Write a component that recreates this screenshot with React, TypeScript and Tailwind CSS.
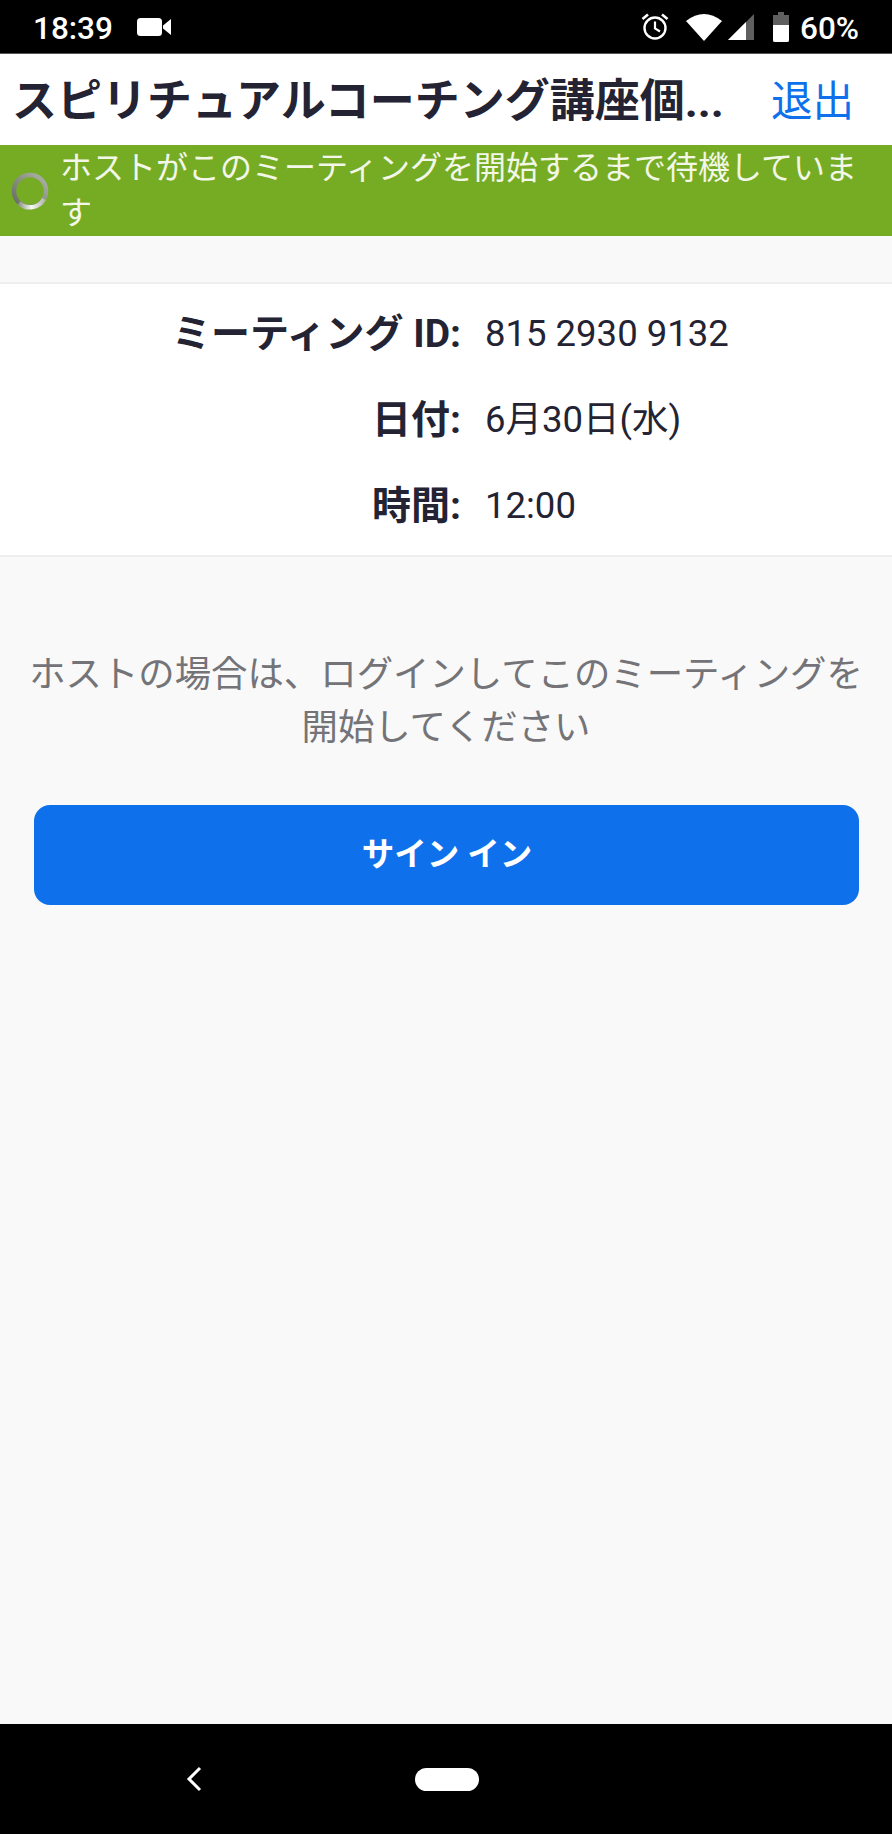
const FONT = "font-['Roboto','Noto_Sans_CJK_JP',sans-serif]";

function StatusBar() {
  return (
    <div className="h-[54px] bg-black flex items-center text-white border-b border-[#555] shrink-0">
      <span className="ml-[33px] mt-[4px] text-[31.5px] leading-none font-medium">18:39</span>
      <svg className="ml-[24px]" width="35" height="20" viewBox="0 0 35 20">
        <rect x="0" y="1" width="25" height="18" rx="3.5" fill="#fff" />
        <path d="M26 8.5 L34 2 V18 L26 11.5 Z" fill="#fff" />
      </svg>
      <div className="ml-auto flex items-center">
        <svg width="30" height="30" viewBox="0 0 30 30" fill="none" stroke="#fff">
          <circle cx="15" cy="16" r="10.5" strokeWidth="2.4" />
          <path d="M15 9.5 V16.5 L20 19.5" strokeWidth="2.2" />
          <path d="M2.5 7 L8 2.5 M27.5 7 L22 2.5" strokeWidth="2.6" />
        </svg>
        <svg className="ml-[16px]" width="36" height="28" viewBox="0 0 36 28">
          <path d="M0 8 Q18 -6 36 8 L18 28 Z" fill="#fff" />
        </svg>
        <svg className="ml-[5px]" width="28" height="28" viewBox="0 0 28 28">
          <path d="M27 1 V27 H1 Z" fill="#5f5f5f" />
          <path d="M19 9 V27 H1 Z" fill="#fff" />
        </svg>
        <svg className="ml-[17px]" width="18" height="30" viewBox="0 0 18 30">
          <path d="M6 0 H12 V3 H17 V30 H1 V3 H6 Z" fill="#5f5f5f" />
          <path d="M1 13 H17 V28 Q17 30 15 30 H3 Q1 30 1 28 Z" fill="#fff" />
        </svg>
        <span className="ml-[10px] mr-[33px] mt-[4px] text-[31.5px] leading-none font-medium">60%</span>
      </div>
    </div>
  );
}

function InfoRow({ label, value }: { label: string; value: string }) {
  return (
    <div className="flex items-center h-[86px]">
      <div className="w-[461px] text-right text-[39px] font-bold text-[#232333] leading-none">{label}</div>
      <div className="ml-[24px] text-[36.5px] text-[#232333] leading-none">{value}</div>
    </div>
  );
}

export default function App() {
  return (
    <div className={`${FONT} w-[892px] h-[1834px] flex flex-col bg-[#f9f9f9]`}>
      <StatusBar />

      {/* Title bar */}
      <div className="h-[91px] bg-white flex items-center pl-[12px] pt-[4px] shrink-0">
        <h1 className="text-[45px] font-bold text-[#232333] leading-none whitespace-nowrap w-[759px]">
          スピリチュアルコーチング講座個...
        </h1>
        <span className="text-[41.5px] text-[#0e71eb] leading-none">退出</span>
      </div>

      {/* Waiting banner */}
      <div className="h-[91px] bg-[#76ac24] flex items-center shrink-0">
        <svg className="ml-[11px] shrink-0" width="38" height="38" viewBox="0 0 38 38" fill="none">
          <defs>
            <linearGradient id="ring" x1="1" y1="0" x2="0" y2="1">
              <stop offset="0" stopColor="#aeb4a8" />
              <stop offset="1" stopColor="#646a5f" />
            </linearGradient>
            <linearGradient id="tail" x1="0" y1="0" x2="1" y2="0">
              <stop offset="0" stopColor="#8f9788" />
              <stop offset="0.5" stopColor="#f7f8f2" />
              <stop offset="1" stopColor="#b4baac" />
            </linearGradient>
          </defs>
          <circle cx="19" cy="19" r="16" stroke="url(#ring)" strokeWidth="4.5" />
          <path d="M8 31 A16 16 0 0 0 33 27" stroke="url(#tail)" strokeWidth="4.5" />
        </svg>
        <p className="ml-[11px] w-[808px] text-[32px] leading-[45px] text-[#f2f7e8]">
          ホストがこのミーティングを開始するまで待機しています
        </p>
      </div>

      {/* Meeting details */}
      <div className="mt-[46px] bg-white border-y-2 border-[#eeeeee] pt-[7px] pb-[6px] shrink-0">
        <InfoRow label="ミーティング ID:" value="815 2930 9132" />
        <InfoRow label="日付:" value="6月30日(水)" />
        <InfoRow label="時間:" value="12:00" />
      </div>

      {/* Host sign in */}
      <div className="flex-1 flex flex-col items-center px-[30px]">
        <p className="mt-[91px] -mx-[10px] text-center text-[36.4px] leading-[53px] text-[#747478]">
          ホストの場合は、ログインしてこのミーティングを開始してください
        </p>
        <button className="mt-[51px] w-[825px] h-[100px] pl-[2px] rounded-[16px] bg-[#0e71eb] text-white text-[32.5px] font-bold shrink-0">
          サイン イン
        </button>
      </div>

      {/* Navigation bar */}
      <div className="h-[110px] bg-black flex items-center shrink-0">
        <svg className="ml-[185px]" width="18" height="26" viewBox="0 0 18 26" fill="none">
          <path d="M15 2 L4 13 L15 24" stroke="#fff" strokeWidth="3" />
        </svg>
        <div className="ml-[212px] w-[64px] h-[23px] rounded-full bg-white" />
      </div>
    </div>
  );
}
